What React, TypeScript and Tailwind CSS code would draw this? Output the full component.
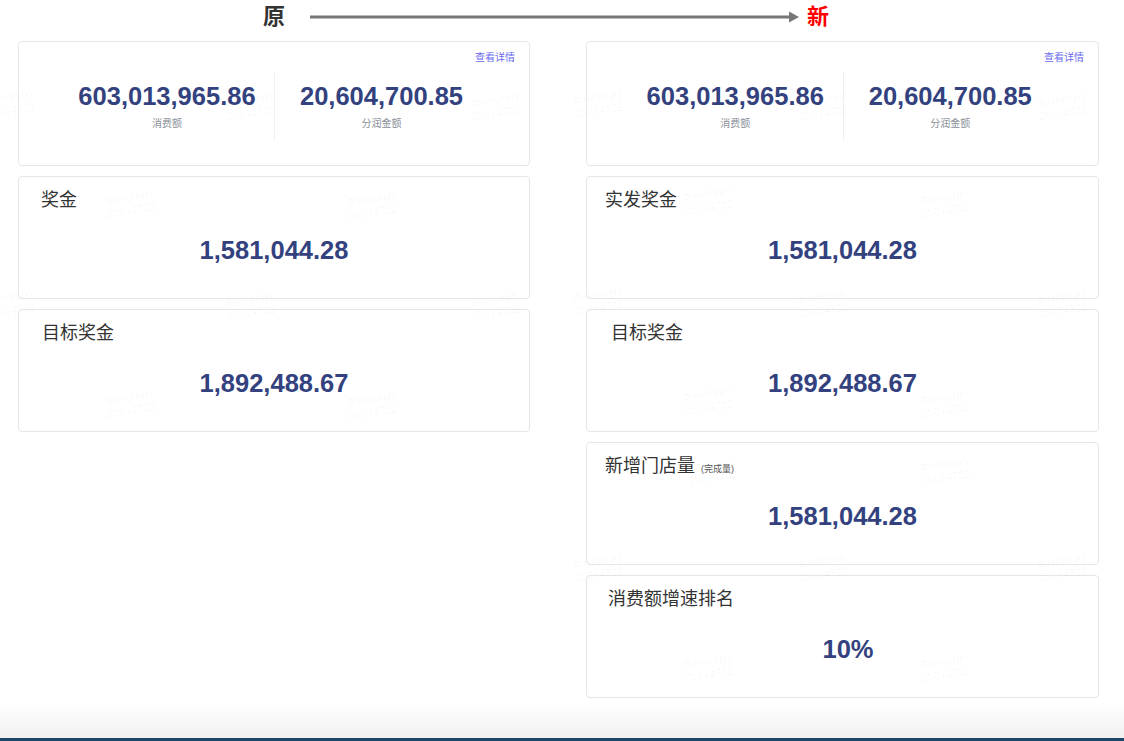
import React from "react";

const FONT = "font-['Liberation_Sans','Noto_Sans_CJK_SC',sans-serif]";

// faint user watermark, tiled roughly like the original page
const marks: [number, number][] = [
    [10, 103], [250, 106], [495, 106],
    [130, 203], [372, 205],
    [10, 303], [250, 305], [495, 305],
    [130, 403], [372, 405],
    [598, 103], [823, 106], [1062, 106],
    [708, 200], [945, 203],
    [598, 300], [823, 303], [1062, 303],
    [708, 400], [945, 403],
    [712, 470], [945, 470],
    [598, 567], [823, 567], [1062, 567],
    [708, 667], [945, 667],
];

function Watermarks() {
    return (
        <div className="pointer-events-none absolute inset-0 overflow-hidden">
            {marks.map(([x, y], i) => (
                <div
                    key={i}
                    className="absolute -translate-x-1/2 -translate-y-1/2 -rotate-[8deg] text-center text-[11px] leading-[14px] text-black/[0.045]"
                    style={{ left: x, top: y }}
                >
                    <div>quxiaoqin</div>
                    <div>35014732</div>
                </div>
            ))}
        </div>
    );
}

function Arrow() {
    return (
        <svg width="490" height="14" viewBox="0 0 490 14" className="block">
            <line x1="0" y1="7" x2="480" y2="7" stroke="#777" strokeWidth="3" />
            <polygon points="479,1.5 489,7 479,12.5" fill="#777" />
        </svg>
    );
}

function SummaryCard() {
    return (
        <div className="h-[125px] rounded-[4px] border border-[#e6e6e6] bg-white">
            <div className="flex justify-end pr-[14px] pt-[9px] text-[10px] leading-[14px] text-[#6a6af0]">
                查看详情
            </div>
            <div className="mt-[7px] grid h-[68px] grid-cols-2 px-[41px]">
                <div className="flex flex-col items-center pt-[9px]">
                    <div className="text-[25.5px] font-bold leading-[30px] text-[#33427f]">603,013,965.86</div>
                    <div className="mt-[6px] text-[10px] leading-[14px] text-[#8a8f99]">消费额</div>
                </div>
                <div className="flex flex-col items-center border-l border-[#efefef] pt-[9px]">
                    <div className="text-[25.5px] font-bold leading-[30px] text-[#33427f]">20,604,700.85</div>
                    <div className="mt-[6px] text-[10px] leading-[14px] text-[#8a8f99]">分润金额</div>
                </div>
            </div>
        </div>
    );
}

interface StatCardProps {
    title: string;
    note?: string;
    value: string;
    indent: string;
    valueClass?: string;
}

function StatCard({ title, note, value, indent, valueClass = "" }: StatCardProps) {
    return (
        <div className="h-[123px] rounded-[4px] border border-[#e6e6e6] bg-white pt-[11px]">
            <div className={`flex items-end ${indent}`}>
                <span className="text-[18px] leading-[24px] text-[#333]">{title}</span>
                {note && <span className="mb-[3px] ml-[6px] text-[9px] leading-[11px] text-[#555]">{note}</span>}
            </div>
            <div className={`mt-[23px] text-center text-[25.5px] font-bold leading-[30px] text-[#33427f] ${valueClass}`}>
                {value}
            </div>
        </div>
    );
}

export default function App() {
    return (
        <div className={`relative flex h-screen min-h-[741px] flex-col bg-white ${FONT}`}>
            {/* header: 原 → 新 */}
            <div className="flex h-[34px] items-center">
                <span className="ml-[263px] text-[22px] font-bold leading-none text-[#333]">原</span>
                <div className="ml-[25px]">
                    <Arrow />
                </div>
                <span className="ml-[7px] text-[22px] font-bold leading-none text-[#f00]">新</span>
            </div>

            <div className="flex flex-1 items-start gap-[56px] pl-[18px] pt-[7px]">
                <div className="flex w-[512px] flex-col gap-[10px]">
                    <SummaryCard />
                    <StatCard title="奖金" value="1,581,044.28" indent="pl-[22px]" />
                    <StatCard title="目标奖金" value="1,892,488.67" indent="pl-[23px]" />
                </div>
                <div className="flex w-[513px] flex-col gap-[10px]">
                    <SummaryCard />
                    <StatCard title="实发奖金" value="1,581,044.28" indent="pl-[18px]" />
                    <StatCard title="目标奖金" value="1,892,488.67" indent="pl-[24px]" />
                    <StatCard title="新增门店量" note="(完成量)" value="1,581,044.28" indent="pl-[18px]" />
                    <StatCard title="消费额增速排名" value="10%" indent="pl-[21px]" valueClass="pl-[11px]" />
                </div>
            </div>

            {/* bottom fade + dark strip */}
            <div className="h-[36px] bg-gradient-to-b from-white to-[#f1f1f1]" />
            <div className="h-[3px] bg-[#1d4768]" />

            <Watermarks />
        </div>
    );
}
